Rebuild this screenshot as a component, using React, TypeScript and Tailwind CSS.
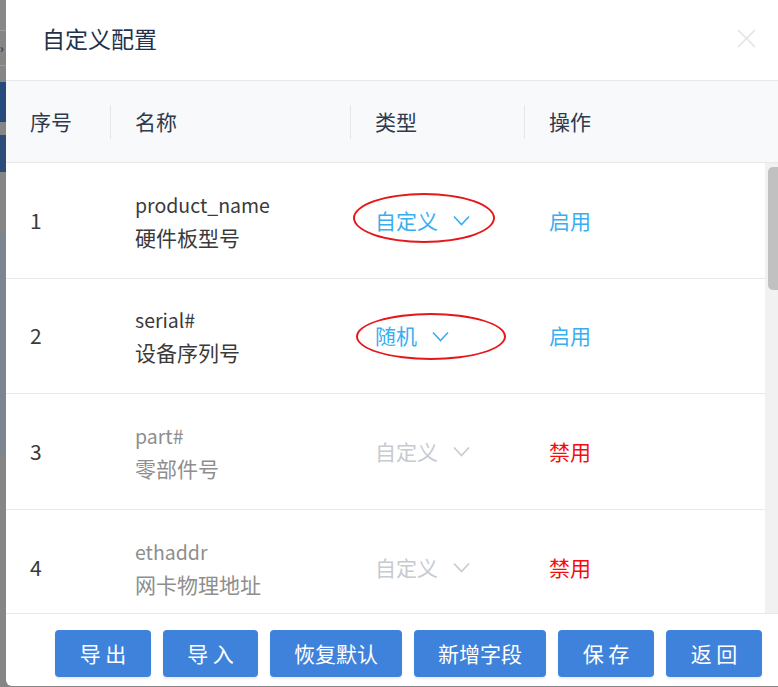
import { ReactNode } from 'react'

type Row = {
  no: number
  key: string
  label: string
  type: string
  enabled: boolean
  h: string
  mark?: string
}

const rows: Row[] = [
  { no: 1, key: 'product_name', label: '硬件板型号', type: '自定义', enabled: true, h: 'h-[116px]', mark: 'left-[3px] top-[30px] w-[142px] h-[50px]' },
  { no: 2, key: 'serial#', label: '设备序列号', type: '随机', enabled: true, h: 'h-[115px]', mark: 'left-[6px] top-[34px] w-[150px] h-[47px]' },
  { no: 3, key: 'part#', label: '零部件号', type: '自定义', enabled: false, h: 'h-[116px]' },
  { no: 4, key: 'ethaddr', label: '网卡物理地址', type: '自定义', enabled: false, h: 'h-[116px]' },
]

const buttons = [
  { text: '导 出', w: 'w-[96px]' },
  { text: '导 入', w: 'w-[95px]' },
  { text: '恢复默认', w: 'w-[132px]' },
  { text: '新增字段', w: 'w-[132px]' },
  { text: '保 存', w: 'w-[96px]' },
  { text: '返 回', w: 'w-[96px]' },
]

function Chevron({ color }: { color: string }) {
  return (
    <svg width="17" height="11" viewBox="0 0 17 11" fill="none" className="ml-[15px]">
      <path d="M1 1.5 L8.5 9.5 L16 1.5" stroke={color} strokeWidth="1.6" />
    </svg>
  )
}

function HeadCell({ w, first, children }: { w: string; first?: boolean; children: ReactNode }) {
  return (
    <div className={`${w} flex items-center ${first ? 'pl-[24px]' : ''}`}>
      {!first && <span className="w-px h-[34px] bg-[#e4e6ea] mr-[24px]" />}
      <span>{children}</span>
    </div>
  )
}

export default function App() {
  return (
    <div className="w-[778px] h-[687px] bg-[#868686] flex overflow-hidden font-['Noto_Sans_CJK_SC','Noto_Sans',sans-serif]">
      {/* dimmed page behind the dialog */}
      <div className="w-[6px] flex flex-col shrink-0">
        <div className="h-[30px] bg-[#888888]" />
        <div className="h-px bg-[#9c9c9c]" />
        <div className="h-[34px] bg-[#868686] flex items-center text-[12px] leading-none text-[#222]">›</div>
        <div className="h-px bg-[#9c9c9c]" />
        <div className="h-[16px] bg-[#868686]" />
        <div className="h-[40px] bg-[#274a7c]" />
        <div className="h-[13px] bg-[#868686]" />
        <div className="h-[37px] bg-[#2d4c7a]" />
        <div className="h-[60px] bg-[#868686]" />
        <div className="h-[223px] bg-[#7d8591]" />
        <div className="flex-1 bg-[#868686]" />
      </div>

      <div className="flex-1 h-[686px] bg-white rounded-bl-[6px] flex flex-col">
        {/* title */}
        <div className="h-[80px] flex items-center justify-between pl-[36px] pr-[22px] pb-[3px] shrink-0">
          <span className="text-[23px] text-[#24314a]">自定义配置</span>
          <svg width="19" height="19" viewBox="0 0 19 19" fill="none">
            <path d="M1 1 L18 18 M18 1 L1 18" stroke="#e3e3e3" strokeWidth="1.6" />
          </svg>
        </div>

        {/* table head */}
        <div className="h-[83px] shrink-0 flex border-y border-[#e6e8eb] bg-[#f8f9fa] text-[21px] text-[#2f3a4d]">
          <HeadCell w="w-[104px]" first>序号</HeadCell>
          <HeadCell w="w-[240px]">名称</HeadCell>
          <HeadCell w="w-[174px]">类型</HeadCell>
          <HeadCell w="flex-1">操作</HeadCell>
        </div>

        {/* table body */}
        <div className="h-[450px] shrink-0 flex overflow-hidden">
          <div className="flex-1 flex flex-col">
            {rows.map(r => (
              <div key={r.no} className={`${r.h} shrink-0 flex border-b border-[#e8eaed] text-[21px]`}>
                <div className="w-[104px] pl-[24px] flex items-center text-[#3a3a3a]">{r.no}</div>
                <div className={`w-[240px] pl-[25px] flex flex-col justify-center leading-[33px] ${r.enabled ? 'text-[#3a3a3a]' : 'text-[#8e8e8e]'}`}>
                  <span className="text-[19.5px]">{r.key}</span>
                  <span>{r.label}</span>
                </div>
                <div className="w-[174px] pl-[25px] flex items-center relative">
                  <span className={r.enabled ? 'text-[#38aef1]' : 'text-[#c6cad1]'}>{r.type}</span>
                  <Chevron color={r.enabled ? '#38aef1' : '#c6cad1'} />
                  {r.mark && <div className={`absolute ${r.mark} rounded-[50%] border-[2.5px] border-[#e5171a]`} />}
                </div>
                <div className={`flex-1 pl-[25px] flex items-center ${r.enabled ? 'text-[#38aef1]' : 'text-[#f50c0c]'}`}>
                  {r.enabled ? '启用' : '禁用'}
                </div>
              </div>
            ))}
          </div>
          <div className="w-[13px] bg-[#f1f1f1] pt-[4px] pl-[3px]">
            <div className="h-[123px] bg-[#c1c1c1] rounded-l-[5px]" />
          </div>
        </div>

        {/* footer */}
        <div className="flex-1 border-t border-[#e6e8eb] flex justify-end items-start gap-[12px] pt-[16px] pr-[16px]">
          {buttons.map(b => (
            <button key={b.text} className={`${b.w} h-[47px] rounded-[4px] bg-[#3f82db] text-white text-[21px] shadow-[0_2px_2px_rgba(0,0,0,0.08)]`}>
              {b.text}
            </button>
          ))}
        </div>
      </div>
    </div>
  )
}
